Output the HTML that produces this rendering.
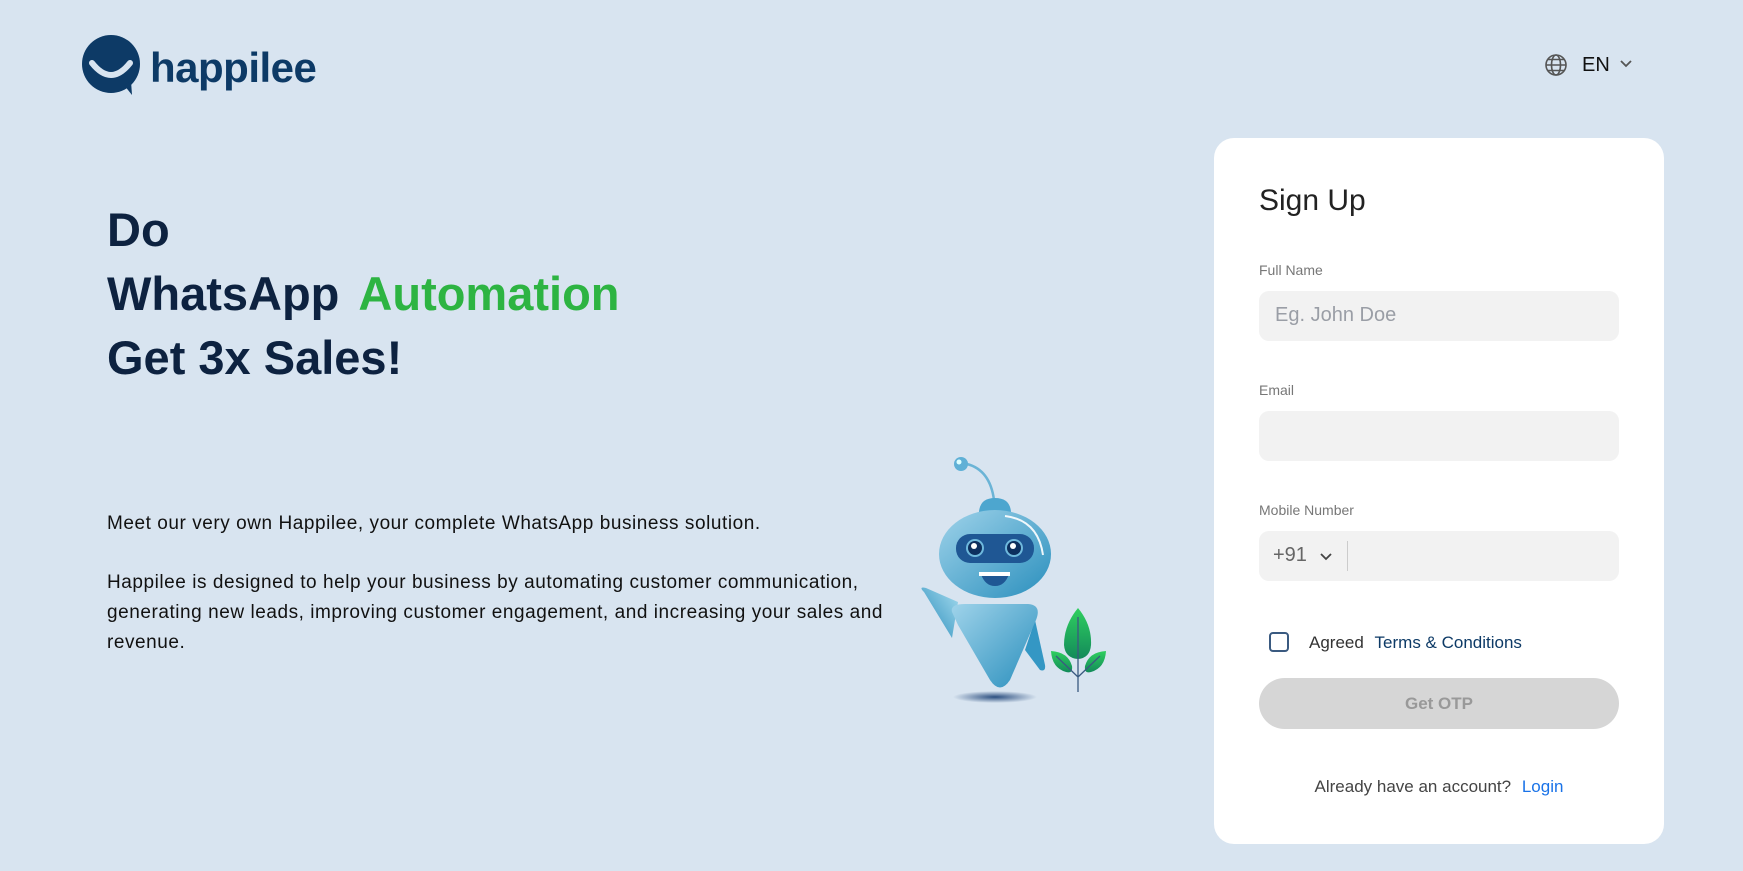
<!DOCTYPE html>
<html><head><meta charset="utf-8"><style>
*{margin:0;padding:0;box-sizing:border-box}
body{width:1743px;height:871px;background:#d8e4f0;font-family:"Liberation Sans",sans-serif;position:relative;overflow:hidden}
.abs{position:absolute}
.logo-text{left:150px;top:44px;font-size:42px;font-weight:bold;color:#0d3a66;letter-spacing:-0.5px}
.h{left:107px;font-size:47px;font-weight:bold;color:#0d2240;line-height:1}
.p{left:107px;font-size:19px;color:#111;white-space:nowrap;line-height:30px;letter-spacing:0.55px}
.card{left:1214px;top:138px;width:450px;height:706px;background:#fff;border-radius:20px}
.lbl{left:1259px;font-size:14px;color:#777}
.inp{left:1259px;width:360px;height:50px;background:#f2f2f2;border-radius:10px}
</style></head><body>
<svg class="abs" style="left:80px;top:33px" width="64" height="66" viewBox="0 0 64 66">
<circle cx="31" cy="31" r="29" fill="#0d3a66"/>
<path d="M44 52 L52 62 L51 48 Z" fill="#0d3a66"/>
<path d="M12 30 Q31 54 50 30" stroke="#d8e4f0" stroke-width="6" fill="none" stroke-linecap="round"/>
</svg>
<div class="abs logo-text">happilee</div>

<svg class="abs" style="left:1544px;top:53px" width="24" height="24" viewBox="0 0 24 24" fill="none" stroke="#555" stroke-width="1.6"><circle cx="12" cy="12" r="10"/><ellipse cx="12" cy="12" rx="4.5" ry="10"/><path d="M2 12h20M4 6.5h16M4 17.5h16"/></svg>
<div class="abs" style="left:1582px;top:54px;font-size:20px;color:#111">EN</div>
<svg class="abs" style="left:1619px;top:59px" width="14" height="10" viewBox="0 0 14 10"><path d="M2 2l5 5 5-5" stroke="#555" stroke-width="1.8" fill="none"/></svg>

<div class="abs h" style="top:206px">Do</div>
<div class="abs h" style="top:270px">WhatsApp <span style="color:#2db442;margin-left:6px">Automation</span></div>
<div class="abs h" style="top:334px">Get 3x Sales!</div>

<div class="abs p" style="top:509px">Meet our very own Happilee, your complete WhatsApp business solution.</div>
<div class="abs p" style="top:568px">Happilee is designed to help your business by automating customer communication,<br>generating new leads, improving customer engagement, and increasing your sales and<br>revenue.</div>

<svg class="abs" style="left:900px;top:440px" width="220" height="280" viewBox="900 440 220 280">
<defs>
<linearGradient id="g1" x1="0" y1="0" x2="1" y2="1"><stop offset="0" stop-color="#9fd3ea"/><stop offset="1" stop-color="#2a8fbd"/></linearGradient>
<linearGradient id="g2" x1="1" y1="0" x2="0" y2="1"><stop offset="0" stop-color="#a6dcef"/><stop offset="1" stop-color="#2388b8"/></linearGradient>
<linearGradient id="lf" x1="0" y1="0" x2="0" y2="1"><stop offset="0" stop-color="#2fcf5f"/><stop offset="1" stop-color="#138a5a"/></linearGradient>
<radialGradient id="sh"><stop offset="0" stop-color="#2c4f80"/><stop offset="1" stop-color="#2c4f80" stop-opacity="0"/></radialGradient>
</defs>
<ellipse cx="995" cy="697" rx="42" ry="6" fill="url(#sh)"/>
<path d="M967 464 Q990 470 994 500" stroke="#6bb4d6" stroke-width="2.5" fill="none"/>
<circle cx="961" cy="464" r="7" fill="#5fb0d6"/><circle cx="959" cy="462" r="2.5" fill="#dff"/>
<path d="M979 512 Q980 498 995 498 Q1010 498 1011 512Z" fill="#4da6cf"/>
<path d="M924 592 Q918 586 926 588 L958 602 L952 638 Z" fill="url(#g2)"/>
<path d="M1035 620 L1045 665 Q1046 672 1040 670 L1025 650Z" fill="#3497c4"/>
<path d="M952 612 Q950 604 965 604 L1028 604 Q1042 605 1036 620 L1010 680 Q1000 695 990 680 L958 625Z" fill="url(#g1)"/>
<ellipse cx="995" cy="554" rx="56" ry="44" fill="url(#g1)"/>
<path d="M1005 516 Q1038 520 1043 555" stroke="#fff" stroke-width="2" fill="none" opacity=".9"/>
<rect x="956" y="534" width="78" height="29" rx="14" fill="#1f5794"/>
<circle cx="975" cy="548" r="9" fill="#6fb9dd"/><circle cx="975" cy="548" r="7" fill="#0d2f5e"/><circle cx="974" cy="546" r="3" fill="#fff"/>
<circle cx="1014" cy="548" r="9" fill="#6fb9dd"/><circle cx="1014" cy="548" r="7" fill="#0d2f5e"/><circle cx="1013" cy="546" r="3" fill="#fff"/>
<path d="M981 574 L1009 574 Q1005 586 995 586 Q985 586 981 574Z" fill="#1f5794"/>
<rect x="979" y="572" width="31" height="4" fill="#fff"/>
<path d="M1078 608 Q1092 625 1091 645 Q1090 658 1078 659 Q1065 658 1064 645 Q1064 625 1078 608Z" fill="url(#lf)"/>
<path d="M1051 651 Q1068 652 1072 666 Q1073 674 1066 672 Q1052 668 1051 651Z" fill="url(#lf)"/>
<path d="M1106 651 Q1089 652 1085 666 Q1084 674 1091 672 Q1105 668 1106 651Z" fill="url(#lf)"/>
<path d="M1078 617 L1078 692 M1078 677 L1056 656 M1078 677 L1100 656" stroke="#3a5a80" stroke-width="1.3" fill="none"/>
</svg>

<div class="abs card"></div>
<div class="abs" style="left:1259px;top:184px;font-size:30px;color:#222">Sign Up</div>
<div class="abs lbl" style="top:262px">Full Name</div>
<div class="abs inp" style="top:291px"><span style="position:absolute;left:16px;top:13px;font-size:20px;color:#9a9ea6">Eg. John Doe</span></div>
<div class="abs lbl" style="top:382px">Email</div>
<div class="abs inp" style="top:411px"></div>
<div class="abs lbl" style="top:502px">Mobile Number</div>
<div class="abs inp" style="top:531px"><span style="position:absolute;left:14px;top:13px;font-size:20px;color:#666">+91</span>
<svg style="position:absolute;left:60px;top:21px" width="14" height="10" viewBox="0 0 14 10"><path d="M2 2l5 5 5-5" stroke="#444" stroke-width="1.8" fill="none"/></svg>
<div style="position:absolute;left:88px;top:10px;width:1px;height:30px;background:#ccc"></div></div>
<div class="abs" style="left:1269px;top:632px;width:20px;height:20px;border:2px solid #3a5a80;border-radius:4px"></div>
<div class="abs" style="left:1309px;top:633px;font-size:17px;color:#333">Agreed <span style="color:#0d3a66;margin-left:6px">Terms &amp; Conditions</span></div>
<div class="abs" style="left:1259px;top:678px;width:360px;height:51px;border-radius:26px;background:#d6d6d6;text-align:center;line-height:51px;font-size:17px;font-weight:bold;color:#999">Get OTP</div>
<div class="abs" style="left:1214px;width:450px;top:777px;text-align:center;font-size:17px;color:#444">Already have an account? <span style="color:#1a73e8;margin-left:6px">Login</span></div>
</body></html>
